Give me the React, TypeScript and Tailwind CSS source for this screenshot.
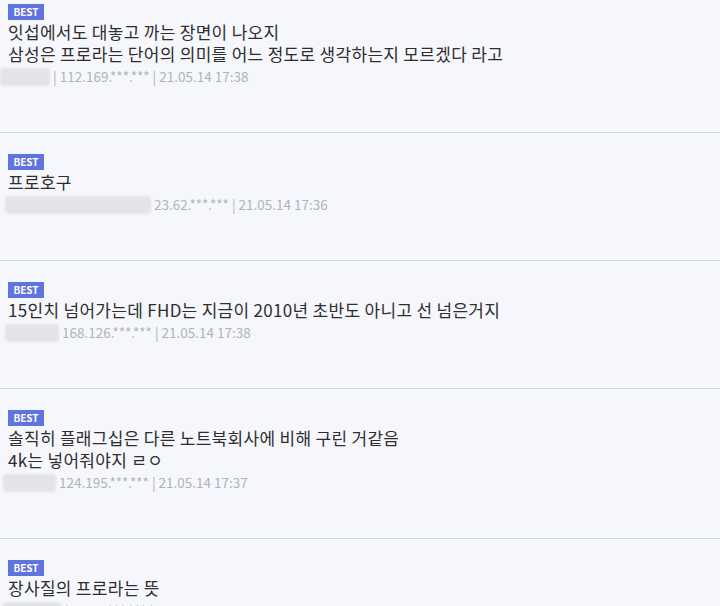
import React from "react";

interface Comment {
  lines: string[];
  blurWidth: number;
  blurLeft: number;
  meta: string;
}

const comments: Comment[] = [
  {
    lines: [
      "잇섭에서도 대놓고 까는 장면이 나오지",
      "삼성은 프로라는 단어의 의미를 어느 정도로 생각하는지 모르겠다 라고",
    ],
    blurLeft: 0,
    blurWidth: 50,
    meta: "| 112.169.***.*** | 21.05.14 17:38",
  },
  {
    lines: ["프로호구"],
    blurLeft: 5,
    blurWidth: 146,
    meta: "23.62.***.*** | 21.05.14 17:36",
  },
  {
    lines: ["15인치 넘어가는데 FHD는 지금이 2010년 초반도 아니고 선 넘은거지"],
    blurLeft: 5,
    blurWidth: 54,
    meta: "168.126.***.*** | 21.05.14 17:38",
  },
  {
    lines: ["솔직히 플래그십은 다른 노트북회사에 비해 구린 거같음", "4k는 넣어줘야지 ㄹㅇ"],
    blurLeft: 3,
    blurWidth: 53,
    meta: "124.195.***.*** | 21.05.14 17:37",
  },
  {
    lines: ["장사질의 프로라는 뜻"],
    blurLeft: 2,
    blurWidth: 60,
    meta: "| 1.238.***.*** | 21.05.14 17:35",
  },
];

function CommentItem({ c, first }: { c: Comment; first: boolean }) {
  return (
    <div
      className={`border-b border-[#d5d8de] pb-[44px] ${first ? "pt-[4px]" : "pt-[21px]"}`}
    >
      <div className="flex pl-2">
        <span className="flex h-4 w-9 items-center justify-center bg-[#5f74df] text-[10px] font-bold leading-none text-white">
          BEST
        </span>
      </div>
      <div className="px-2 pt-px text-[17px] leading-[22px] tracking-[0.3px] text-[#2e2e2e]">
        {c.lines.map((l, i) => (
          <p key={i}>{l}</p>
        ))}
      </div>
      <div className="flex h-[23px] items-center text-[13.5px] leading-none text-[#b0b3b8]">
        <span
          className="h-[18px] shrink-0 rounded-sm bg-[#e2e4ea] blur-[1px]"
          style={{ marginLeft: c.blurLeft, width: c.blurWidth }}
        />
        <span className="ml-[3px]">{c.meta}</span>
      </div>
    </div>
  );
}

export default function App() {
  return (
    <div
      className="h-[606px] w-[720px] overflow-hidden bg-[#f5f7fc]"
      style={{ fontFamily: '"Noto Sans CJK KR", "Noto Sans", sans-serif' }}
    >
      {comments.map((c, i) => (
        <CommentItem key={i} c={c} first={i === 0} />
      ))}
    </div>
  );
}
